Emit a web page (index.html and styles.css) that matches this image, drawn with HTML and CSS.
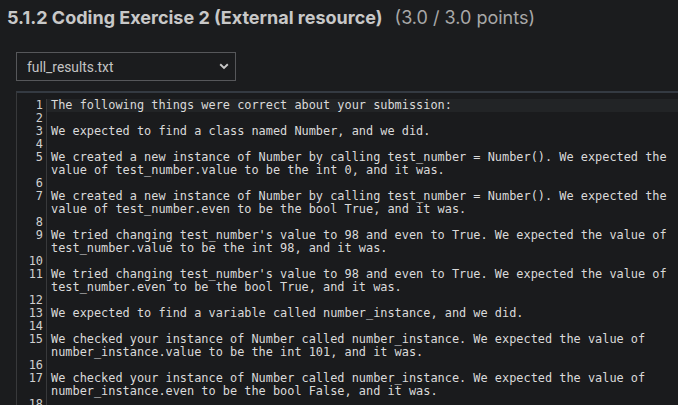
FILE: index.html
```html
<!DOCTYPE html>
<html>
<head>
<meta charset="utf-8">
<link rel="stylesheet" href="styles.css">
</head>
<body>
<div class="page">
  <h1 class="title"><span class="title-main">5.1.2 Coding Exercise 2 (External resource)</span><span class="points">(3.0 / 3.0 points)</span></h1>
  <div class="select">
    <span class="select-text">full_results.txt</span>
    <svg class="chevron" width="10" height="7" viewBox="0 0 10 7"><path d="M1.2 1.3 L5 5 L8.8 1.3" fill="none" stroke="#c8c8c8" stroke-width="1.9"/></svg>
  </div>
  <div class="editor">
    <div class="row active"><span class="ln">1</span><span class="code">The following things were correct about your submission:</span></div>
    <div class="row"><span class="ln">2</span><span class="code"></span></div>
    <div class="row"><span class="ln">3</span><span class="code">We expected to find a class named Number, and we did.</span></div>
    <div class="row"><span class="ln">4</span><span class="code"></span></div>
    <div class="row"><span class="ln">5</span><span class="code">We created a new instance of Number by calling test_number = Number(). We expected the value of test_number.value to be the int 0, and it was.</span></div>
    <div class="row"><span class="ln">6</span><span class="code"></span></div>
    <div class="row"><span class="ln">7</span><span class="code">We created a new instance of Number by calling test_number = Number(). We expected the value of test_number.even to be the bool True, and it was.</span></div>
    <div class="row"><span class="ln">8</span><span class="code"></span></div>
    <div class="row"><span class="ln">9</span><span class="code">We tried changing test_number's value to 98 and even to True. We expected the value of test_number.value to be the int 98, and it was.</span></div>
    <div class="row"><span class="ln">10</span><span class="code"></span></div>
    <div class="row"><span class="ln">11</span><span class="code">We tried changing test_number's value to 98 and even to True. We expected the value of test_number.even to be the bool True, and it was.</span></div>
    <div class="row"><span class="ln">12</span><span class="code"></span></div>
    <div class="row"><span class="ln">13</span><span class="code">We expected to find a variable called number_instance, and we did.</span></div>
    <div class="row"><span class="ln">14</span><span class="code"></span></div>
    <div class="row"><span class="ln">15</span><span class="code">We checked your instance of Number called number_instance. We expected the value of number_instance.value to be the int 101, and it was.</span></div>
    <div class="row"><span class="ln">16</span><span class="code"></span></div>
    <div class="row"><span class="ln">17</span><span class="code">We checked your instance of Number called number_instance. We expected the value of number_instance.even to be the bool False, and it was.</span></div>
    <div class="row"><span class="ln">18</span><span class="code"></span></div>
  </div>
</div>
</body>
</html>
```

FILE: styles.css
```css
html, body {
  margin: 0;
  padding: 0;
  background: #1b1c1e;
  overflow: hidden;
  height: 405px;
}
.page {
  padding: 5px 0 0 7px;
  font-family: Roboto, "Liberation Sans", sans-serif;
}
.title {
  margin: 0;
  font-family: Inter, Roboto, sans-serif;
  font-size: 18px;
  line-height: 25px;
  font-weight: 700;
  color: #c8c8c8;
  display: flex;
  gap: 12px;
  align-items: baseline;
}
.points {
  font-weight: 400;
  color: #a8a8a8;
}
.select {
  margin: 22px 0 0 9px;
  height: 27px;
  border: 1px solid #56575a;
  display: flex;
  align-items: center;
  justify-content: space-between;
  padding: 0 6px 0 10px;
  box-sizing: content-box;
  width: 202px;
}
.select-text {
  font-size: 13.8px;
  color: #c4c4c4;
}
.chevron {
  display: block;
}
.editor {
  margin: 10px 0 0 9px;
  border-top: 2px solid #343a42;
  border-left: 1px solid #38393b;
  padding-top: 6px;
  width: 700px;
  background: #1a1b1d;
  font-family: "DejaVu Sans Mono", "Liberation Mono", monospace;
  font-size: 11.9px;
  line-height: 13px;
  color: #dadada;
}
.row {
  display: flex;
}
.ln {
  flex: 0 0 26px;
  padding-right: 3px;
  text-align: right;
  border-right: 1px solid #38393b;
  color: #d0d0d0;
}
.code {
  padding-left: 4px;
  width: 88ch;
  white-space: pre-wrap;
  min-height: 13px;
}
.row.active .code {
  background: #222426;
  flex: 1;
}
```
